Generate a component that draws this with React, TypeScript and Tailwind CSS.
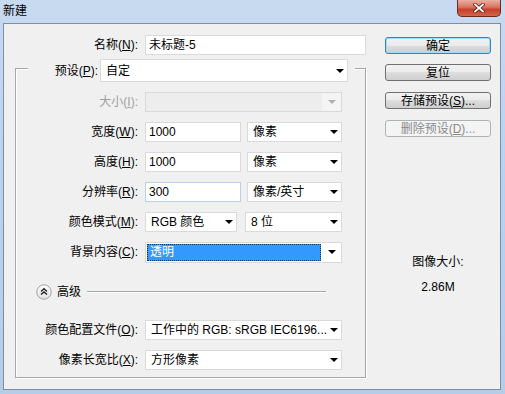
import React from 'react';

const font = "font-['Liberation_Sans','Noto_Sans_CJK_SC',sans-serif]";

const Label: React.FC<{ text: string; k: string; disabled?: boolean; className?: string }> = ({
  text,
  k,
  disabled,
  className = 'w-[122px]',
}) => (
  <span
    className={`${className} shrink-0 text-right text-[12px] leading-none whitespace-nowrap ${
      disabled ? 'text-[#a0a0a0]' : 'text-black'
    }`}
  >
    {text}(<span className="underline">{k}</span>):
  </span>
);

const Arrow: React.FC<{ disabled?: boolean }> = ({ disabled }) => (
  <span
    className={`block h-0 w-0 border-x-[4px] border-t-[4px] border-x-transparent ${
      disabled ? 'border-t-[#b0b0b0]' : 'border-t-black'
    }`}
  />
);

const Select: React.FC<{ value?: string; className: string; disabled?: boolean; selected?: boolean }> = ({
  value,
  className,
  disabled,
  selected,
}) => {
  if (disabled) {
    return (
      <div className={`${className} flex h-[20px] items-stretch border border-[#d9d9d9] bg-[#ededed]`}>
        <div className="flex-1" />
        <div className="flex w-[19px] items-center justify-center bg-[#f4f4f4]">
          <Arrow disabled />
        </div>
      </div>
    );
  }
  if (selected) {
    return (
      <div className={`${className} flex h-[21px] items-stretch border border-[#d9d9d9] bg-white`}>
        <div className="m-[1px] flex flex-1 items-center border border-dotted border-[#1b2e4a] bg-[#3399ff] pl-[2px] text-[12px] text-white">
          {value}
        </div>
        <div className="flex w-[19px] items-center justify-center">
          <Arrow />
        </div>
      </div>
    );
  }
  return (
    <div
      className={`${className} flex items-center justify-between border border-[#dadada] bg-white pl-[5px] pr-[3px] text-[12px] text-black`}
    >
      <span className="whitespace-nowrap">{value}</span>
      <Arrow />
    </div>
  );
};

const Input: React.FC<{ value: string; className: string; focus?: boolean }> = ({ value, className, focus }) => (
  <div
    className={`${className} flex h-[20px] items-center border bg-white pl-[3px] text-[12px] text-black ${
      focus ? 'border-[#b8d0ea]' : 'border-[#dadada]'
    }`}
  >
    {value}
  </div>
);

const Button: React.FC<{ children: React.ReactNode; primary?: boolean; disabled?: boolean; className?: string }> = ({
  children,
  primary,
  disabled,
  className = '',
}) => (
  <div
    className={`${className} flex h-[17px] w-[106px] items-center justify-center rounded-[3px] border text-[12px] leading-none whitespace-nowrap ${
      disabled
        ? 'border-[#adb2b5] bg-[#f4f4f4] text-[#8a8a8a]'
        : primary
        ? 'border-[#3c7fb1] bg-[linear-gradient(to_bottom,#f2f2f2_0%,#ebebeb_50%,#dddddd_50%,#cfcfcf_100%)] text-black shadow-[inset_0_0_0_1px_#9fdcf8]'
        : 'border-[#707070] bg-[linear-gradient(to_bottom,#f2f2f2_0%,#ebebeb_50%,#dddddd_50%,#cfcfcf_100%)] text-black'
    }`}
  >
    {children}
  </div>
);

const Row: React.FC<{ children: React.ReactNode; className?: string }> = ({ children, className = 'mt-[10px]' }) => (
  <div className={`${className} flex h-[20px] items-center`}>{children}</div>
);

export default function App() {
  return (
    <div
      className={`${font} flex h-[394px] w-[505px] flex-col bg-[linear-gradient(180deg,#c7daf0_0%,#bcd2ec_40%,#b6cde8_100%)] pb-[4px] pl-[3px] pr-[4px] text-black`}
    >
      {/* title bar */}
      <div className="flex h-[23px] items-start justify-between">
        <span className="pt-[4px] text-[12px] leading-[14px]">新建</span>
        <div className="flex h-[17px] w-[44px] items-center justify-center rounded-b-[5px] border border-t-0 border-[#6b2b20] bg-[linear-gradient(to_bottom,#eab0a3_0%,#d9735f_45%,#c4402a_60%,#d2664a_100%)]">
          <svg width="12" height="10" viewBox="0 0 12 10">
            <path d="M2 1.5 L10 8.5 M10 1.5 L2 8.5" stroke="#5a1c14" strokeWidth="3.4" strokeLinecap="square" />
            <path d="M2 1.5 L10 8.5 M10 1.5 L2 8.5" stroke="#ffffff" strokeWidth="1.8" strokeLinecap="square" />
          </svg>
        </div>
      </div>

      {/* client */}
      <div className="flex flex-1 border border-[#7a8ea8] bg-[#f0f0f0]">
        <div className="w-[362px] shrink-0">
          <div className="mt-[11px] flex h-[20px] items-center">
            <Label text="名称" k="N" className="w-[134px]" />
            <Input value="未标题-5" className="ml-[7px] w-[222px]" />
          </div>

          <div className="ml-[11px] mt-[13px] w-[351px] border border-[#a7a7a7] pb-[7px] shadow-[inset_1px_1px_0_#ffffff,1px_1px_0_#ffffff]">
            <div className="-mt-[10px] ml-[12px] flex h-[23px] w-[327px] items-center bg-[#f0f0f0]">
              <Label text="预设" k="P" className="w-[70px]" />
              <Select value="自定" className="ml-[2px] h-[23px] w-[248px]" />
            </div>

            <Row>
              <Label text="大小" k="I" disabled />
              <Select className="ml-[7px] w-[197px]" disabled />
            </Row>
            <Row>
              <Label text="宽度" k="W" />
              <Input value="1000" className="ml-[7px] w-[96px]" />
              <Select value="像素" className="ml-[6px] h-[20px] w-[95px]" />
            </Row>
            <Row>
              <Label text="高度" k="H" />
              <Input value="1000" className="ml-[7px] w-[96px]" />
              <Select value="像素" className="ml-[6px] h-[20px] w-[95px]" />
            </Row>
            <Row>
              <Label text="分辨率" k="R" />
              <Input value="300" className="ml-[7px] w-[96px]" focus />
              <Select value="像素/英寸" className="ml-[6px] h-[20px] w-[95px]" />
            </Row>
            <Row>
              <Label text="颜色模式" k="M" />
              <Select value="RGB 颜色" className="ml-[7px] h-[20px] w-[92px]" />
              <Select value="8 位" className="ml-[8px] h-[20px] w-[97px]" />
            </Row>
            <Row>
              <Label text="背景内容" k="C" />
              <Select value="透明" className="ml-[7px] w-[197px]" selected />
            </Row>

            <Row className="mt-[20px]">
              <svg className="ml-[20px] shrink-0" width="16" height="16" viewBox="0 0 16 16">
                <defs>
                  <linearGradient id="adv" x1="0" y1="0" x2="0" y2="1">
                    <stop offset="0" stopColor="#ffffff" />
                    <stop offset="1" stopColor="#e2e2e2" />
                  </linearGradient>
                </defs>
                <circle cx="8" cy="8" r="7.2" fill="url(#adv)" stroke="#a3a3a3" />
                <path d="M5 7.5 L8 4.8 L11 7.5 M5 10.6 L8 7.9 L11 10.6" fill="none" stroke="#222" strokeWidth="1.4" />
              </svg>
              <span className="ml-[5px] text-[12px] leading-none">高级</span>
              <div className="ml-[6px] mr-[39px] h-[2px] flex-1 border-t border-[#a7a7a7] border-b-white border-b" />
            </Row>

            <Row className="mt-[18px]">
              <Label text="颜色配置文件" k="O" />
              <Select value="工作中的 RGB: sRGB IEC6196..." className="ml-[7px] h-[20px] w-[197px]" />
            </Row>
            <Row>
              <Label text="像素长宽比" k="X" />
              <Select value="方形像素" className="ml-[7px] h-[20px] w-[197px]" />
            </Row>
          </div>
        </div>

        <div className="flex flex-col pl-[19px]">
          <Button primary className="mt-[13px]">
            确定
          </Button>
          <Button className="mt-[10px]">复位</Button>
          <Button className="mt-[11px]">
            存储预设(<span className="underline">S</span>)...
          </Button>
          <Button disabled className="mt-[11px]">
            删除预设(<span className="underline">D</span>)...
          </Button>
          <div className="mt-[117px] w-[106px] text-center text-[12px] leading-[16px]">图像大小:</div>
          <div className="mt-[9px] w-[106px] text-center text-[12px] leading-[16px]">2.86M</div>
        </div>
      </div>
    </div>
  );
}
